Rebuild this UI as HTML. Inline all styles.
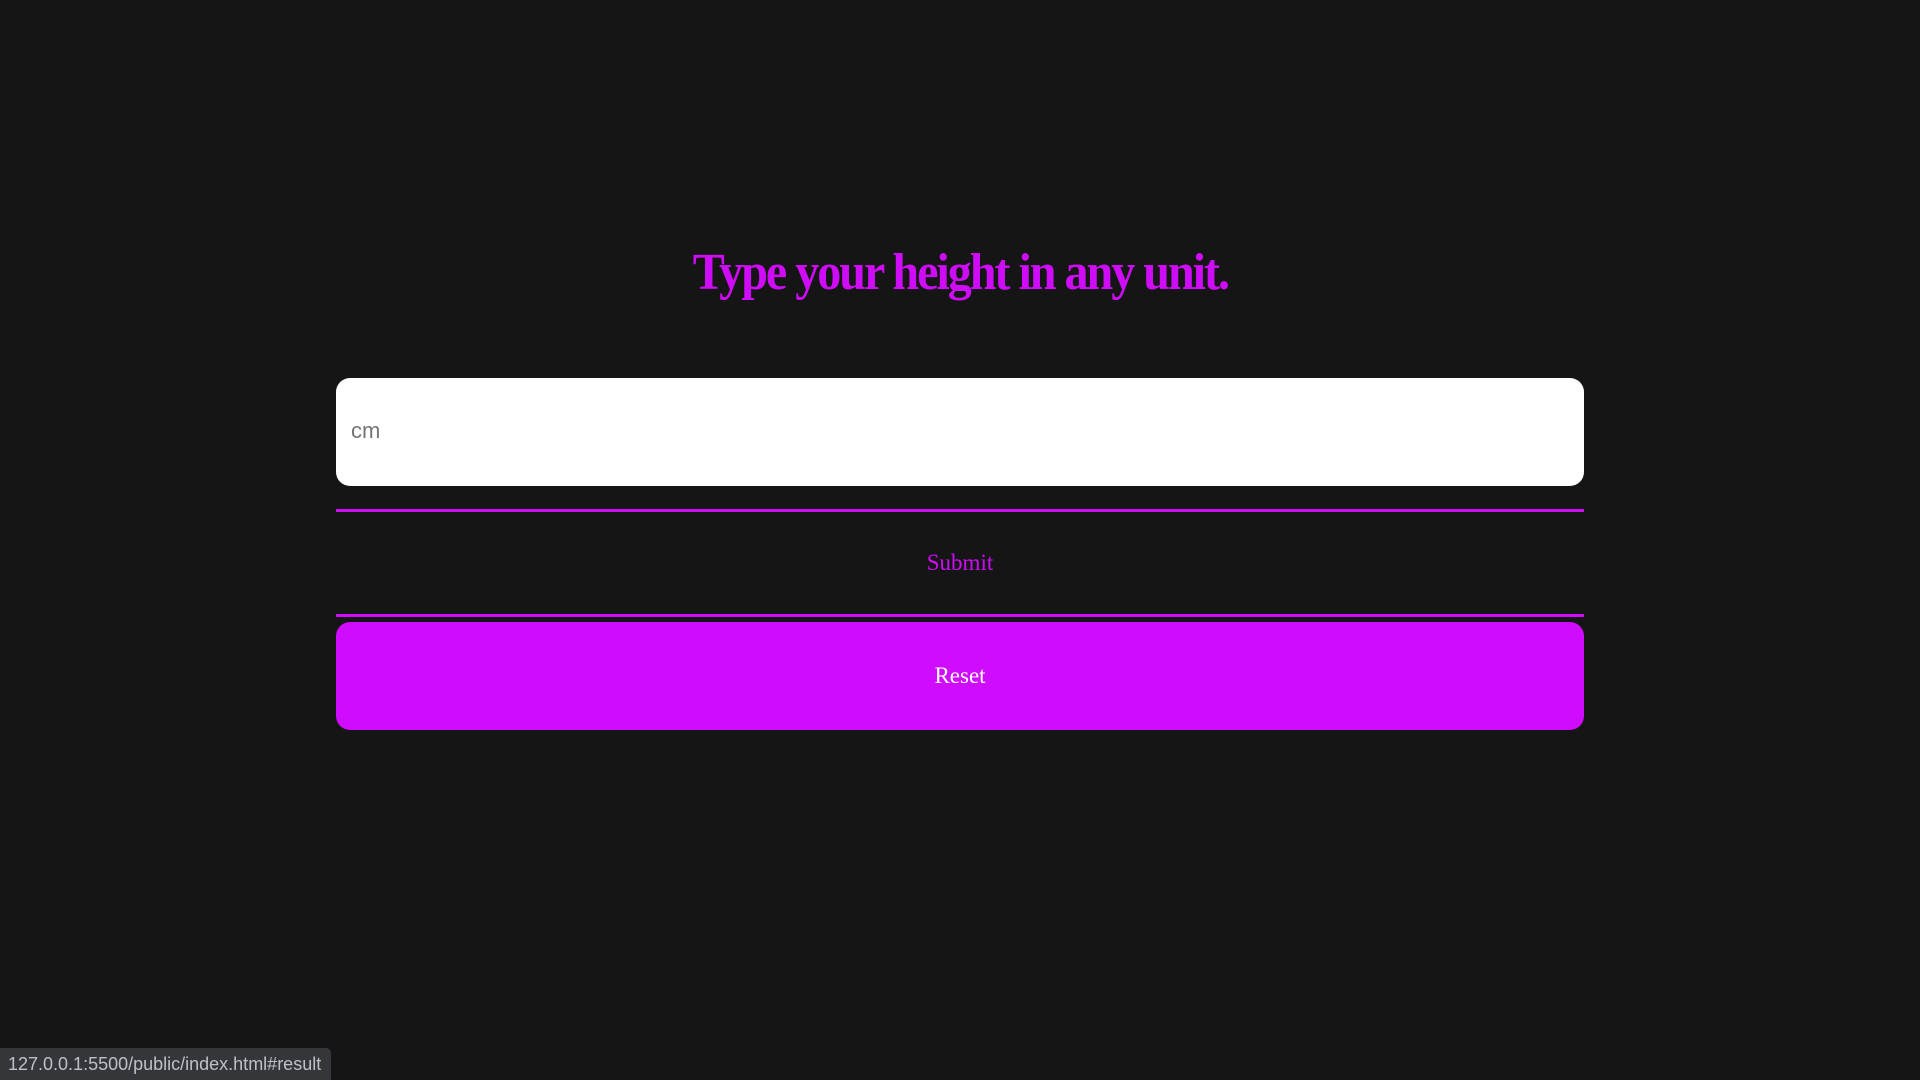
<!DOCTYPE html>
<html><head><style>
html,body{margin:0;padding:0;background:#151515;width:1920px;height:1080px;overflow:hidden;position:relative;font-family:"Liberation Serif",serif}
h1{position:absolute;left:0;width:1920px;top:238px;margin:0;text-align:center;font-size:52px;line-height:70px;color:#cf0cf8;font-weight:bold;letter-spacing:-2.2px}
h1 span{display:inline-block;transform:scaleX(0.925);transform-origin:center}
.inp{position:absolute;left:336px;top:378px;width:1248px;height:108px;background:#fff;border-radius:14px}
.inp span{position:absolute;left:15px;top:40px;font:22px "Liberation Sans",sans-serif;color:#757575}
.sub{position:absolute;left:336px;top:509px;width:1248px;height:102px;border-top:3px solid #cf0cf8;border-bottom:3px solid #cf0cf8;text-align:center;line-height:102px;font-size:23px;color:#cf0cf8}
.res{position:absolute;left:336px;top:622px;width:1248px;height:108px;background:#cf0cfd;border-radius:14px;text-align:center;line-height:108px;font-size:23px;color:#fff}
.st{position:absolute;left:0;top:1048px;width:331px;height:32px;background:#35363a;border-top-right-radius:5px;color:#bdc1c6;font:18px "Liberation Sans",sans-serif;line-height:32px;padding-left:8px;box-sizing:border-box;white-space:nowrap}
</style></head><body>
<h1><span>Type your height in any unit.</span></h1>
<div class="inp"><span>cm</span></div>
<div class="sub">Submit</div>
<div class="res">Reset</div>
<div class="st">127.0.0.1:5500/public/index.html#result</div>
</body></html>
